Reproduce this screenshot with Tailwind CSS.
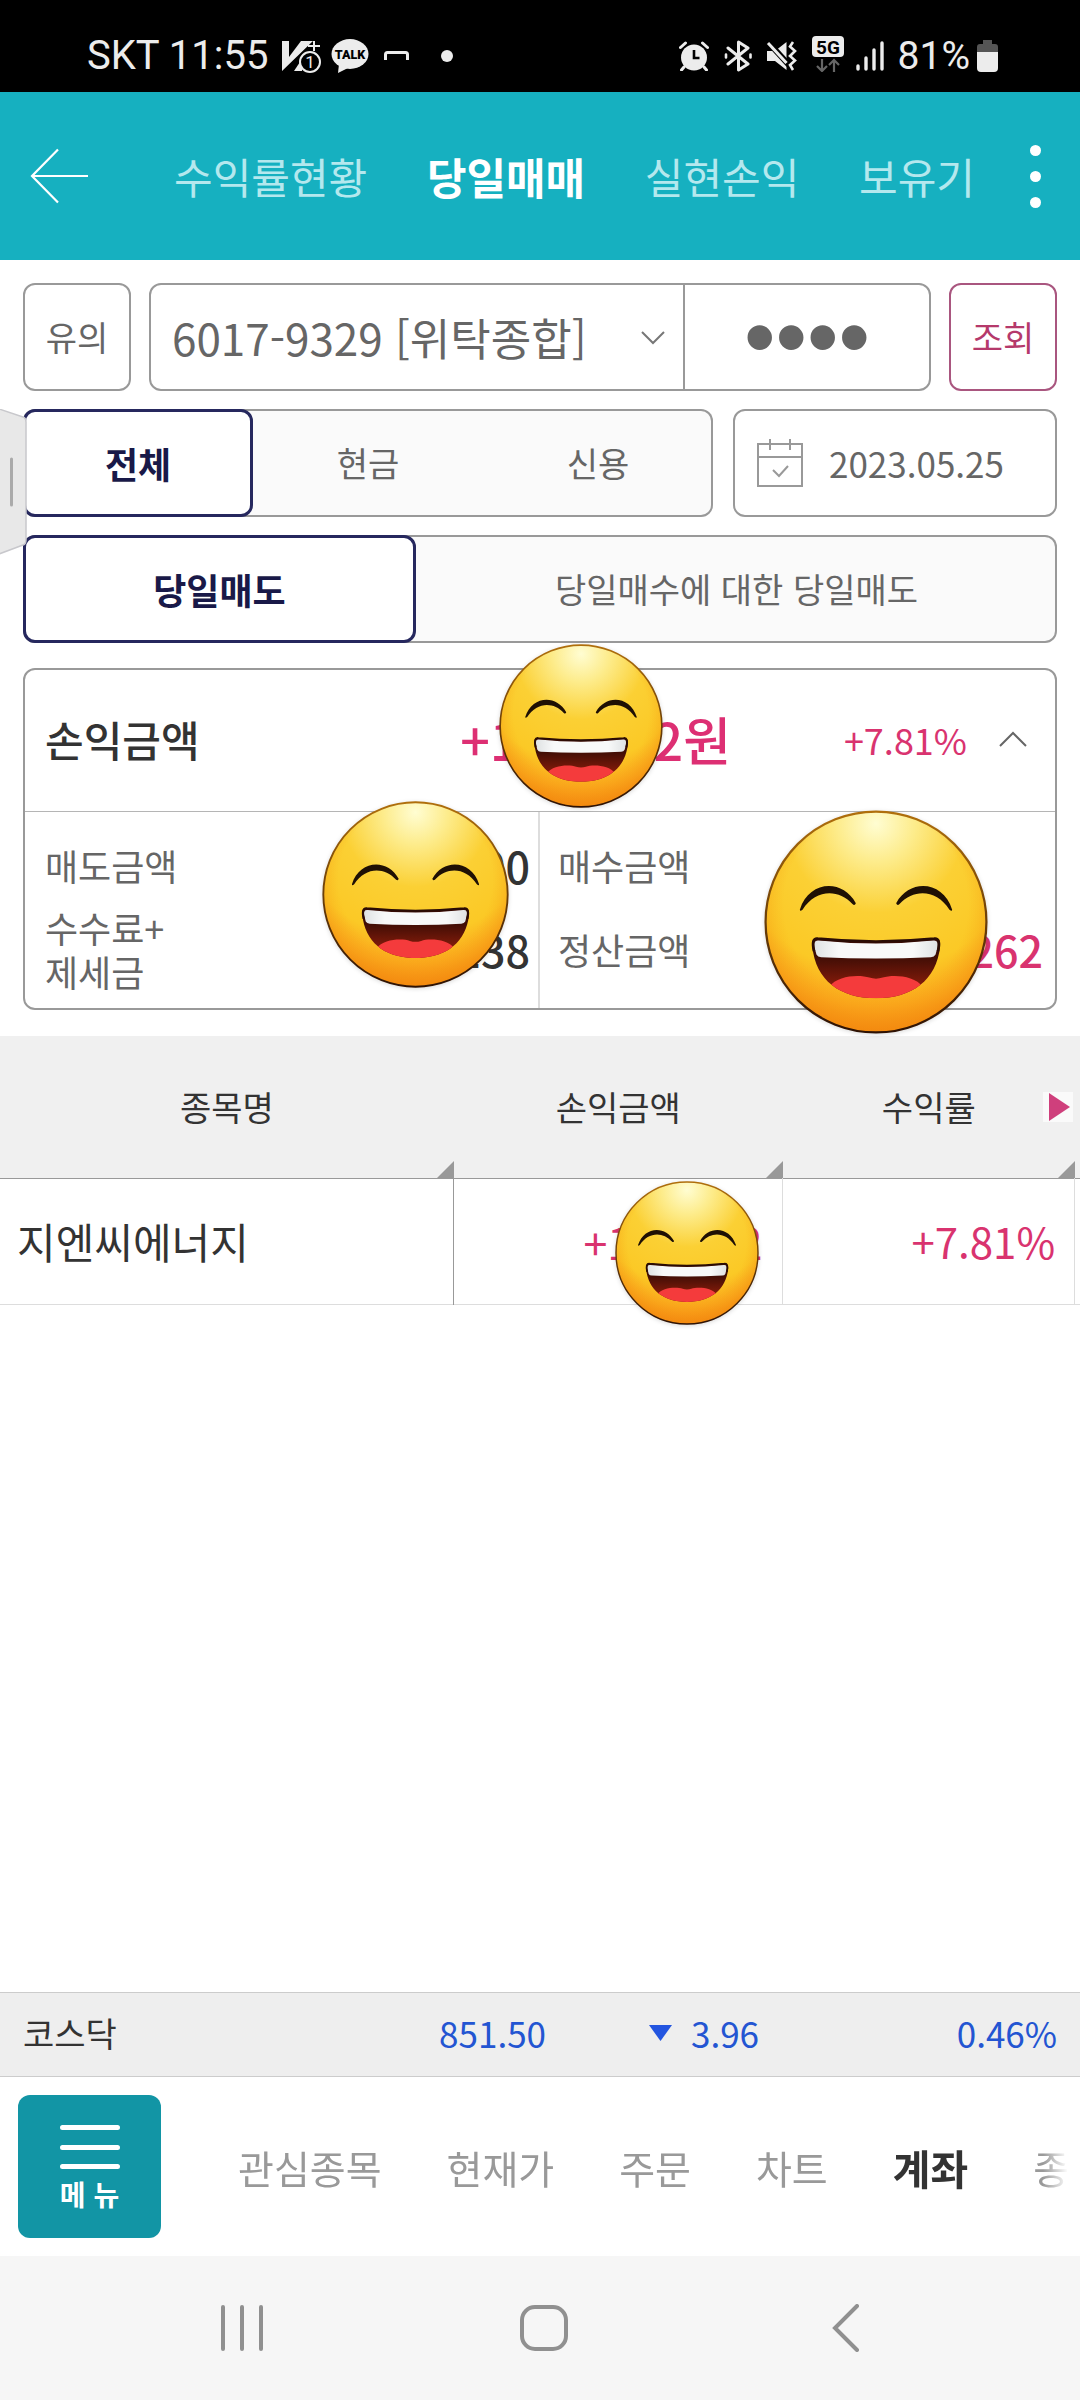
<!DOCTYPE html>
<html lang="ko">
<head>
    <meta charset="UTF-8">
    <meta name="viewport" content="width=device-width, initial-scale=1.0">
    <title>당일매매</title>
    <script src="https://cdn.jsdelivr.net/npm/@tailwindcss/browser@4"></script>
</head>
<body class="min-h-screen flex flex-col bg-white font-['Noto_Sans_CJK_KR',sans-serif] text-[34px] leading-[44px] text-[#666666]">

    <!-- Shared emoji sticker -->
    <svg class="absolute size-0" aria-hidden="true">
        <defs>
            <radialGradient id="face" gradientUnits="userSpaceOnUse" cx="50" cy="6" r="95">
                <stop offset="0" stop-color="#fffdd2"/>
                <stop offset="0.18" stop-color="#fdec8c"/>
                <stop offset="0.42" stop-color="#fbd034"/>
                <stop offset="0.7" stop-color="#fbc926"/>
                <stop offset="0.86" stop-color="#faa51b"/>
                <stop offset="1" stop-color="#f57d0e"/>
            </radialGradient>
            <radialGradient id="edge" cx="0.5" cy="0.42" r="0.58">
                <stop offset="0.72" stop-color="#f9a91a" stop-opacity="0"/>
                <stop offset="1" stop-color="#f28c0f" stop-opacity="0.75"/>
            </radialGradient>
            <linearGradient id="rim" x1="0" y1="0" x2="0" y2="1">
                <stop offset="0" stop-color="#b06f0c"/>
                <stop offset="0.5" stop-color="#6b3e08"/>
                <stop offset="1" stop-color="#2e1204"/>
            </linearGradient>
            <linearGradient id="mouth" x1="0" y1="0" x2="0" y2="1">
                <stop offset="0.3" stop-color="#3d0d05"/>
                <stop offset="0.7" stop-color="#7d1a0a"/>
            </linearGradient>
            <linearGradient id="teeth" x1="0" y1="0" x2="1" y2="0">
                <stop offset="0" stop-color="#dfe2e3"/>
                <stop offset="0.2" stop-color="#f8f9f9"/>
                <stop offset="0.8" stop-color="#f8f9f9"/>
                <stop offset="1" stop-color="#dfe2e3"/>
            </linearGradient>
            <clipPath id="mouthClip">
                <path d="M24 57.3 Q50 60 76 57.3 Q79 57 78.6 61 C77 76 66 84 50 84 C34 84 23 76 21.6 61 Q21 57 24 57.3Z"/>
            </clipPath>
            <symbol id="grin" viewBox="0 0 100 100">
                <circle cx="50" cy="50" r="49.3" fill="url(#face)"/>
                <circle cx="50" cy="50" r="49.3" fill="url(#edge)" stroke="url(#rim)" stroke-width="1"/>
                <path d="M16 44.5 C20 31.5 35 30.5 41 41.6 Q40.5 43 39.5 42 C33 35 23 35.5 17.2 44.5 Q16 45.5 16 44.5Z" fill="#1f1004"/>
                <path d="M84 44.5 C80 31.5 65 30.5 59 41.6 Q59.5 43 60.5 42 C67 35 77 35.5 82.8 44.5 Q84 45.5 84 44.5Z" fill="#1f1004"/>
                <g clip-path="url(#mouthClip)">
                    <rect x="20" y="56" width="60" height="30" fill="url(#mouth)"/>
                    <path d="M29 79 C33 73.5 43 73.5 47 74.8 Q50 75.800 53 74.8 C57 73.5 67 73.5 71 79 L66 90 H34Z" fill="#f43b3c"/>
                </g>
                <path d="M24.5 58.3 Q50 61 75.5 58.3 Q78 58 77.5 61 L76.6 64.5 Q76 65.6 74.5 65.7 Q50 67 25.5 65.7 Q24 65.6 23.4 64.5 L22.5 61 Q22 58 24.5 58.3Z" fill="url(#teeth)"/>
                <path d="M22.3 63 Q21 57 24 57.4 Q50 60 76 57.4 Q79 57 77.7 63" fill="none" stroke="#2a0c04" stroke-width="1.2"/>
            </symbol>
        </defs>
    </svg>

    <!-- Status bar -->
    <div class="h-[92px] shrink-0 bg-black text-[#ececec] font-[Roboto,sans-serif] flex items-center justify-between pl-[87px] pr-[82px] pt-[20px]">
        <div class="flex items-center">
            <span class="text-[40px]">SKT 11:55</span>
            <svg class="w-[40px] h-[34px] ml-[14px]" viewBox="0 0 40 34" fill="#ececec">
                <path d="M0 2h7v16L19 2h12L0 32z"/>
                <path d="M12 32l8-12v12z"/>
                <path d="M32 2v10M26 7h12" stroke="#ececec" stroke-width="2"/>
                <circle cx="28" cy="23" r="10" fill="#000" stroke="#ececec" stroke-width="2"/>
                <text x="28" y="29" font-size="17" text-anchor="middle">1</text>
            </svg>
            <svg class="w-[38px] h-[36px] ml-[9px]" viewBox="0 0 38 36" fill="#ececec">
                <ellipse cx="19" cy="16" rx="18.5" ry="15"/>
                <path d="M8 26l-1 9 12-6z"/>
                <text x="19" y="20.5" font-size="12.5" font-weight="900" fill="#000" text-anchor="middle">TALK</text>
            </svg>
            <svg class="w-[25px] h-[10px] ml-[15px]" viewBox="0 0 25 10" fill="none" stroke="#ececec" stroke-width="3">
                <path d="M1.5 9V3.5Q1.5 1.5 3.5 1.5H21.5Q23.5 1.5 23.5 3.5V9"/>
            </svg>
            <span class="w-[12px] h-[12px] ml-[32px] rounded-full bg-[#ececec]"></span>
        </div>
        <div class="flex items-center">
            <!-- alarm -->
            <svg class="w-[30px] h-[30px]" viewBox="0 0 30 30">
                <circle cx="15" cy="16.5" r="13" fill="#ececec"/>
                <path d="M1.5 6.5L6.5 2M28.5 6.5L23.5 2M5 26l-2.5 3M25 26l2.5 3" stroke="#ececec" stroke-width="3" stroke-linecap="round"/>
                <path d="M15 9v8h5.5" fill="none" stroke="#000" stroke-width="2.6"/>
            </svg>
            <!-- bluetooth -->
            <svg class="w-[28px] h-[32px] ml-[15px]" viewBox="0 0 28 32" fill="none" stroke="#ececec" stroke-width="3" stroke-linejoin="round" stroke-linecap="round">
                <path d="M4 8L24 24 14.5 30V2L24 8 4 24"/>
                <path d="M2 14.5v3M26.5 14.5v3" stroke-width="2.6"/>
            </svg>
            <!-- muted, vibrate -->
            <svg class="w-[31px] h-[30px] ml-[14px]" viewBox="0 0 31 30">
                <path d="M1 10h8L20.5 1v28L9 20H1z" fill="#ececec"/>
                <path d="M1 0l22 24" stroke="#000" stroke-width="6"/>
                <path d="M2 2l18.5 20" stroke="#ececec" stroke-width="3"/>
                <path d="M27 1l-3 4.5 5 4.5-5 5 5 4.5-5 4.5 3 5" fill="none" stroke="#ececec" stroke-width="2.6"/>
            </svg>
            <!-- 5G -->
            <svg class="w-[32px] h-[36px] ml-[15px] mb-[4px]" viewBox="0 0 32 36">
                <rect width="32" height="21" rx="4" fill="#ececec"/>
                <text x="16" y="17.5" font-size="19" font-weight="700" fill="#000" text-anchor="middle">5G</text>
                <path d="M10 23v12M5 30l5 5 5-5M22 36V24M17 29l5-5 5 5" fill="none" stroke="#666" stroke-width="2.2"/>
            </svg>
            <!-- signal -->
            <svg class="w-[28px] h-[30px] ml-[12px]" viewBox="0 0 28 30" stroke="#ececec" stroke-width="3.4" stroke-linecap="round">
                <path d="M2 25v3M10 17v11M18 9v19M26 2v26"/>
            </svg>
            <span class="text-[39px] ml-[14px]">81%</span>
            <svg class="w-[21px] h-[32px] ml-[7px]" viewBox="0 0 21 32">
                <path d="M6 0h9v4h3q3 0 3 3v5H0V7q0-3 3-3h3z" fill="#555"/>
                <path d="M0 12h21v16q0 4-4 4H4q-4 0-4-4z" fill="#ececec"/>
            </svg>
        </div>
    </div>

    <!-- Title tabs -->
    <header class="h-[168px] shrink-0 bg-[#16b0c0] flex items-center pl-[30px] pr-[30px]">
        <button type="button" aria-label="뒤로">
            <svg class="w-[60px] h-[56px]" viewBox="0 0 60 56" fill="none" stroke="#fff" stroke-width="2.2">
                <path d="M28 1.5L2 28l26 26.5M2 28h56"/>
            </svg>
        </button>
        <nav class="flex-1 ml-[84px] mr-[46px] flex items-center justify-between whitespace-nowrap text-[42px] text-[#b4e8ee]">
            <a href="#">수익률현황</a>
            <a href="#" class="text-[43px] font-bold text-white">당일매매</a>
            <a href="#">실현손익</a>
            <a href="#">보유기</a>
        </nav>
        <button type="button" aria-label="더보기" class="flex flex-col gap-[15px] px-[9px]">
            <span class="size-[11px] rounded-full bg-white"></span>
            <span class="size-[11px] rounded-full bg-white"></span>
            <span class="size-[11px] rounded-full bg-white"></span>
        </button>
    </header>

    <main class="relative flex-1">
        <form class="flex flex-col gap-[18px] px-[23px] pt-[23px]">
            <!-- Account row -->
            <div class="flex gap-[18px]">
                <button type="button" class="size-[108px] shrink-0 border-2 border-[#999999] rounded-xl">유의</button>
                <div class="flex-1 h-[108px] flex border-2 border-[#999999] rounded-xl">
                    <div class="relative flex-1">
                        <select aria-label="계좌" class="appearance-none size-full pl-[21px] text-[44px] leading-[60px]">
                            <option>6017-9329 [위탁종합]</option>
                        </select>
                        <svg class="absolute right-[18px] top-[46px] w-[24px] h-[14px] pointer-events-none" viewBox="0 0 24 14" fill="none" stroke="#777" stroke-width="2">
                            <path d="M1 1l11 11L23 1"/>
                        </svg>
                    </div>
                    <input type="password" value="0000" aria-label="비밀번호" class="w-[246px] border-l-2 border-[#999999] text-center font-['Liberation_Sans',sans-serif] text-[90px] leading-[104px]">
                </div>
                <button type="submit" class="size-[108px] shrink-0 border-2 border-[#a9567f] rounded-xl text-[#b5396b]">조회</button>
            </div>

            <!-- Type and date row -->
            <div class="flex gap-[20px]">
                <div class="flex-1 h-[108px] grid grid-cols-3 rounded-xl bg-[#fafafa] inset-ring-2 inset-ring-[#999999]">
                    <button type="button" class="border-3 border-[#26285e] rounded-xl bg-white text-[36px] font-bold text-[#191948]">전체</button>
                    <button type="button">현금</button>
                    <button type="button">신용</button>
                </div>
                <label class="w-[324px] h-[108px] flex items-center gap-[26px] pl-[22px] border-2 border-[#999999] rounded-xl">
                    <svg class="w-[46px] h-[48px] shrink-0" viewBox="0 0 46 48" fill="none" stroke="#999" stroke-width="2">
                        <path d="M1 5h44v42H1zM1 18h44M13 0v11M33 0v11M16 31l6 6 9-10"/>
                    </svg>
                    <input type="text" value="2023.05.25" aria-label="조회일자" class="min-w-0 flex-1 text-[35px]">
                </label>
            </div>

            <!-- Sell type row -->
            <div class="h-[108px] flex rounded-xl bg-[#fafafa] inset-ring-2 inset-ring-[#999999]">
                <button type="button" class="w-[38%] border-3 border-[#26285e] rounded-xl bg-white text-[36px] font-bold text-[#191948]">당일매도</button>
                <button type="button" class="flex-1">당일매수에 대한 당일매도</button>
            </div>
        </form>

        <!-- Profit summary -->
        <section class="mx-[23px] mt-[25px] border-2 border-[#999999] rounded-xl">
            <div class="h-[142px] flex items-center border-b border-[#b5b5b5] pl-[20px] pr-[28px] pb-[4px]">
                <h2 class="text-[42px] font-medium text-[#333333]">손익금액</h2>
                <p class="relative flex-1 text-right text-[52px] font-medium text-[#dd2f73]">+171,262원
                    <svg class="absolute right-[68px] -top-[73px] size-[164px] drop-shadow-sm"><use href="#grin"/></svg>
                </p>
                <p class="w-[236px] text-right text-[36px] text-[#d9336f]">+7.81%</p>
                <button type="button" aria-label="접기" class="ml-[32px]">
                    <svg class="w-[28px] h-[16px]" viewBox="0 0 28 16" fill="none" stroke="#666" stroke-width="2">
                        <path d="M1 15L14 2l13 13"/>
                    </svg>
                </button>
            </div>
            <div class="grid grid-cols-2 text-[36px]">
                <dl class="relative grid grid-cols-[1fr_auto] auto-rows-[84px] items-center pt-[11px] pb-[17px] pl-[20px] pr-[8px] border-r-2 border-[#dddddd]">
                    <dt>매도금액</dt>
                    <dd class="text-[43px] font-medium text-[#333333]">2,369,400</dd>
                    <dt>수수료+<br>제세금</dt>
                    <dd class="text-right text-[43px] font-medium text-[#333333]">5,138</dd>
                    <svg class="absolute right-[29px] -top-[11px] size-[187px] drop-shadow-sm"><use href="#grin"/></svg>
                </dl>
                <dl class="relative grid grid-cols-[1fr_auto] auto-rows-[84px] items-center pt-[11px] pb-[17px] pl-[18px] pr-[12px]">
                    <dt>매수금액</dt>
                    <dd class="pr-[80px] text-[43px] font-medium text-[#333333]">2,193</dd>
                    <dt>정산금액</dt>
                    <dd class="text-right text-[43px] font-medium text-[#d9336f]">171,262</dd>
                    <svg class="absolute right-[67px] -top-[2px] size-[224px] drop-shadow-sm"><use href="#grin"/></svg>
                </dl>
            </div>
        </section>

        <!-- Holdings -->
        <table class="w-full mt-[26px] table-fixed border-collapse">
            <colgroup>
                <col class="w-[42%]">
                <col class="w-[30.5%]">
                <col class="w-[27%]">
                <col>
            </colgroup>
            <thead>
                <tr class="h-[142px] bg-[#f0f0f0] border-b border-[#999999] text-[#333333]">
                    <th class="relative font-normal">종목명
                        <svg class="absolute right-0 bottom-0 size-[17px]" viewBox="0 0 17 17"><path d="M17 0v17H0z" fill="#999"/></svg>
                    </th>
                    <th class="relative font-normal">손익금액
                        <svg class="absolute right-0 bottom-0 size-[17px]" viewBox="0 0 17 17"><path d="M17 0v17H0z" fill="#999"/></svg>
                    </th>
                    <th class="relative font-normal">수익률
                        <svg class="absolute right-[2px] top-[56px] w-[30px] h-[30px]" viewBox="0 0 30 30"><path d="M0 0h30v30H0z" fill="#fafafa"/><path d="M6 1l21 14L6 29z" fill="#cf3f7c"/></svg>
                        <svg class="absolute right-0 bottom-0 size-[17px]" viewBox="0 0 17 17"><path d="M17 0v17H0z" fill="#999"/></svg>
                    </th>
                    <th></th>
                </tr>
            </thead>
            <tbody>
                <tr class="h-[126px] border-b border-[#dddddd] text-[42px]">
                    <td class="pl-[17px] border-r border-[#999999] text-[#333333]">지엔씨에너지</td>
                    <td class="relative pr-[20px] border-r border-[#dddddd] text-right text-[43px] text-[#d9336f]">+171,262
                        <svg class="absolute right-[23px] top-[2px] size-[144px] drop-shadow-sm"><use href="#grin"/></svg>
                    </td>
                    <td class="pr-[19px] border-r border-[#dddddd] text-right text-[#d9336f]">+7.81%</td>
                    <td></td>
                </tr>
            </tbody>
        </table>

        <!-- Side drawer handle -->
        <button type="button" aria-label="서랍 열기" class="absolute left-0 top-[149px]">
            <svg class="w-[27px] h-[146px]" viewBox="0 0 27 146">
                <path d="M-1 0L23 8q3 1 3 5v118q0 4-3 5L-1 145z" fill="#e8e8e8" stroke="#c8c8cc" stroke-width="1.5"/>
                <path d="M11.5 50v46" stroke="#aaa" stroke-width="3" stroke-linecap="round"/>
            </svg>
        </button>
    </main>

    <!-- Index ticker -->
    <div class="h-[85px] shrink-0 bg-[#eeeeee] border-y border-[#cccccc] px-[23px] pb-[4px] grid grid-cols-[1fr_322px_213px_298px] items-center text-right text-[35px] text-[#2355d2]">
        <span class="text-left text-[34px] text-[#333333]">코스닥</span>
        <span>851.50</span>
        <span class="flex items-center justify-end gap-[19px]">
            <svg class="w-[23px] h-[16px]" viewBox="0 0 23 16"><path d="M0 0h23L11.5 16z" fill="#2355e0"/></svg>
            3.96
        </span>
        <span>0.46%</span>
    </div>

    <!-- Bottom menu -->
    <nav class="h-[179px] shrink-0 bg-white flex items-center pl-[18px]">
        <button type="button" class="size-[143px] shrink-0 rounded-xl bg-[#1295a5] flex flex-col items-center text-white text-[28px] leading-[36px] font-bold pt-[30px]">
            <svg class="w-[60px] h-[45px]" viewBox="0 0 60 45" stroke="#fff" stroke-width="5" stroke-linecap="round">
                <path d="M2.5 2.5h55M2.5 22.5h55M2.5 41.5h55"/>
            </svg>
            <span class="mt-[6px]">메 뉴</span>
        </button>
        <div class="flex-1 ml-[77px] mr-[12px] flex items-center gap-[65px] overflow-hidden whitespace-nowrap text-[39px] leading-[56px] text-[#999999] mask-r-from-97%">
            <a href="#">관심종목</a>
            <a href="#">현재가</a>
            <a href="#">주문</a>
            <a href="#">차트</a>
            <a href="#" class="text-[41px] font-bold text-[#333333]">계좌</a>
            <a href="#">종</a>
        </div>
    </nav>

    <!-- System navigation -->
    <div class="h-[144px] shrink-0 bg-[#f6f6f6] grid grid-cols-3 items-center justify-items-center pl-[91px] pr-[83px]">
        <button type="button" aria-label="최근 앱">
            <svg class="w-[44px] h-[48px]" viewBox="0 0 44 48" stroke="#909090" stroke-width="4" stroke-linecap="round"><path d="M3 3v42M22 3v42M41 3v42"/></svg>
        </button>
        <button type="button" aria-label="홈">
            <svg class="w-[48px] h-[48px]" viewBox="0 0 48 48" fill="none" stroke="#909090" stroke-width="4"><rect x="2" y="3" width="44" height="42" rx="13"/></svg>
        </button>
        <button type="button" aria-label="이전">
            <svg class="w-[28px] h-[48px]" viewBox="0 0 28 48" fill="none" stroke="#909090" stroke-width="4" stroke-linecap="round"><path d="M25 2L3 24l22 22"/></svg>
        </button>
    </div>
</body>
</html>
